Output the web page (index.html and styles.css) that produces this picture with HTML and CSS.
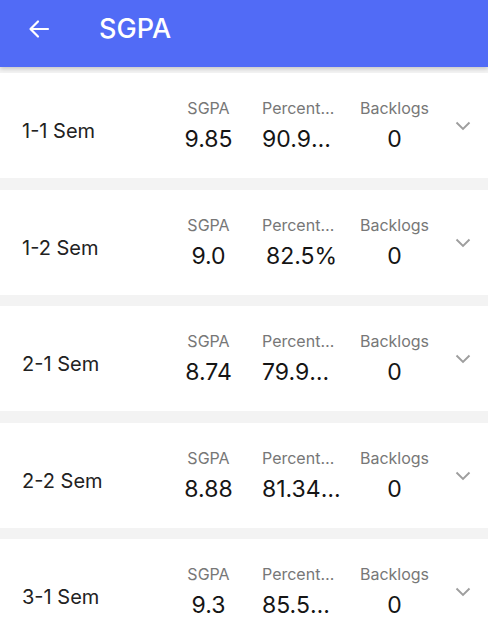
FILE: index.html
```html
<!DOCTYPE html>
<html>
<head>
<meta charset="utf-8">
<link rel="stylesheet" href="styles.css">
</head>
<body>
<header class="appbar">
  <svg class="back" width="24" height="24" viewBox="0 0 24 24"><path d="M21 12H4M11 4.5L3.5 12L11 19.5" fill="none" stroke="#fff" stroke-width="2.2" stroke-linecap="round" stroke-linejoin="round"/></svg>
  <h1 class="title">SGPA</h1>
</header>
<main class="list">
  <section class="card">
    <div class="sem">1-1 Sem</div>
    <div class="stats">
      <div class="stat"><div class="label">SGPA</div><div class="value">9.85</div></div>
      <div class="stat"><div class="label">Percentage</div><div class="value">90.925%</div></div>
      <div class="stat"><div class="label">Backlogs</div><div class="value">0</div></div>
    </div>
    <svg class="chev" width="16" height="10" viewBox="0 0 16 10"><path d="M1.5 1.5L8 8L14.5 1.5" fill="none" stroke="#9e9e9e" stroke-width="1.9"/></svg>
  </section>
  <section class="card">
    <div class="sem">1-2 Sem</div>
    <div class="stats">
      <div class="stat"><div class="label">SGPA</div><div class="value">9.0</div></div>
      <div class="stat"><div class="label">Percentage</div><div class="value">82.5%</div></div>
      <div class="stat"><div class="label">Backlogs</div><div class="value">0</div></div>
    </div>
    <svg class="chev" width="16" height="10" viewBox="0 0 16 10"><path d="M1.5 1.5L8 8L14.5 1.5" fill="none" stroke="#9e9e9e" stroke-width="1.9"/></svg>
  </section>
  <section class="card">
    <div class="sem">2-1 Sem</div>
    <div class="stats">
      <div class="stat"><div class="label">SGPA</div><div class="value">8.74</div></div>
      <div class="stat"><div class="label">Percentage</div><div class="value">79.925%</div></div>
      <div class="stat"><div class="label">Backlogs</div><div class="value">0</div></div>
    </div>
    <svg class="chev" width="16" height="10" viewBox="0 0 16 10"><path d="M1.5 1.5L8 8L14.5 1.5" fill="none" stroke="#9e9e9e" stroke-width="1.9"/></svg>
  </section>
  <section class="card">
    <div class="sem">2-2 Sem</div>
    <div class="stats">
      <div class="stat"><div class="label">SGPA</div><div class="value">8.88</div></div>
      <div class="stat"><div class="label">Percentage</div><div class="value">81.3475%</div></div>
      <div class="stat"><div class="label">Backlogs</div><div class="value">0</div></div>
    </div>
    <svg class="chev" width="16" height="10" viewBox="0 0 16 10"><path d="M1.5 1.5L8 8L14.5 1.5" fill="none" stroke="#9e9e9e" stroke-width="1.9"/></svg>
  </section>
  <section class="card">
    <div class="sem">3-1 Sem</div>
    <div class="stats">
      <div class="stat"><div class="label">SGPA</div><div class="value">9.3</div></div>
      <div class="stat"><div class="label">Percentage</div><div class="value">85.5625%</div></div>
      <div class="stat"><div class="label">Backlogs</div><div class="value">0</div></div>
    </div>
    <svg class="chev" width="16" height="10" viewBox="0 0 16 10"><path d="M1.5 1.5L8 8L14.5 1.5" fill="none" stroke="#9e9e9e" stroke-width="1.9"/></svg>
  </section>
</main>
</body>
</html>
```

FILE: styles.css
```css
* { box-sizing: border-box; }
html, body { margin: 0; padding: 0; }
body {
  background: #f3f3f3;
  font-family: Inter, "Noto Sans", "Liberation Sans", sans-serif;
  width: 488px;
  height: 621px;
  overflow: hidden;
}
.appbar {
  position: relative;
  z-index: 2;
  height: 67px;
  background: #516bf6;
  display: flex;
  align-items: center;
  padding: 0 0 10px 27px;
  box-shadow: 0 2px 4px rgba(0,0,0,0.18);
}
.back { display: block; flex: none; }
.title {
  margin: 0 0 0 48px;
  color: #fff;
  font-size: 27px;
  font-weight: 500;
  letter-spacing: 0;
}
.list {
  display: flex;
  flex-direction: column;
  gap: 11.5px;
  padding-top: 6px;
}
.card {
  background: #fff;
  height: 105px;
  display: flex;
  align-items: center;
  padding: 0 17px 0 22px;
}
.sem {
  flex: 1;
  font-size: 20px;
  color: #222;
  padding-top: 11px;
}
.stats {
  display: flex;
  gap: 14px;
  margin-right: 21px;
}
.stat {
  width: 79px;
  text-align: center;
  white-space: nowrap;
}
.label {
  font-size: 16px;
  color: #777;
  overflow: hidden;
  text-overflow: ellipsis;
  line-height: 20px;
}
.value {
  font-size: 23px;
  color: #151515;
  overflow: hidden;
  text-overflow: ellipsis;
  line-height: 28px;
  margin-top: 7px;
}
.chev { display: block; flex: none; margin-top: 1px; }
```
